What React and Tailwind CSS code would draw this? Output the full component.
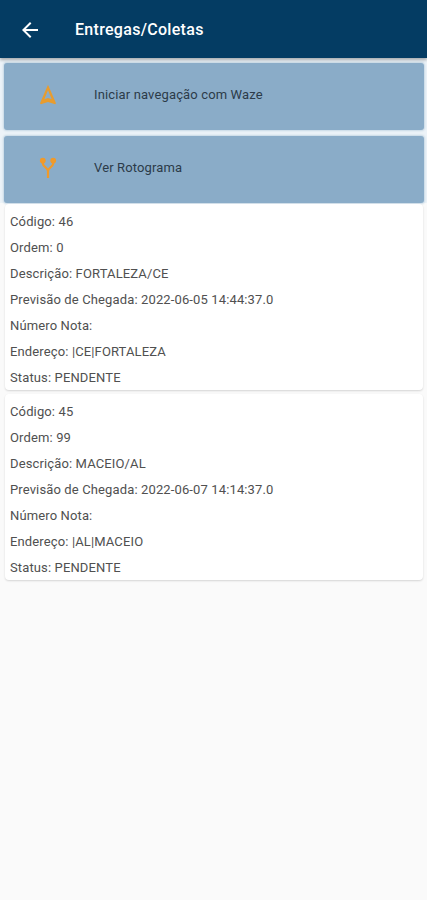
import React from "react";
import { MdArrowBack } from "react-icons/md";

const deliveries = [
  {
    codigo: "46",
    ordem: "0",
    descricao: "FORTALEZA/CE",
    previsao: "2022-06-05 14:44:37.0",
    nota: "",
    endereco: "|CE|FORTALEZA",
    status: "PENDENTE",
  },
  {
    codigo: "45",
    ordem: "99",
    descricao: "MACEIO/AL",
    previsao: "2022-06-07 14:14:37.0",
    nota: "",
    endereco: "|AL|MACEIO",
    status: "PENDENTE",
  },
];

function NavigationIcon() {
  return (
    <svg viewBox="0 0 24 24" className="h-6 w-6 fill-[#e89c2e]">
      <path
        fillRule="evenodd"
        d="M12 1.8 4 20.3l.8.9L12 19l7.2 2.2.8-.9L12 1.8zm0 5.4 3.7 9L12 15.1l-3.7 1.1L12 7.2z"
      />
    </svg>
  );
}

function ForkIcon() {
  return (
    <svg viewBox="0 0 24 24" className="h-6 w-6 fill-[#f09a2a]">
      <circle cx="6.8" cy="4.6" r="2.9" />
      <circle cx="17.2" cy="4.6" r="2.9" />
      <path
        d="M6.8 5v2.5c0 3 5.2 4.5 5.2 7.5V22M17.2 5v2.5c0 3-5.2 4.5-5.2 7.5"
        className="fill-none stroke-[#f09a2a] stroke-[2.2]"
      />
    </svg>
  );
}

function ActionTile({ icon, label }) {
  return (
    <button className="flex h-[67px] w-full items-center rounded-[3px] bg-[#8aacc8] pb-1 pl-8 text-left text-[#2c3b49] shadow-[0_0_2px_1px_#c6d8e5]">
      {icon}
      <span className="ml-[34px] text-[13px] tracking-[0.14px]">{label}</span>
    </button>
  );
}

function DeliveryCard({ item }) {
  return (
    <div className="h-[186px] rounded bg-white px-[5px] pt-[5px] text-[13px] leading-[26px] tracking-[0.13px] text-[#505050] shadow-[0_1px_2px_rgba(0,0,0,0.15)]">
      <p>Código: {item.codigo}</p>
      <p>Ordem: {item.ordem}</p>
      <p>Descrição: {item.descricao}</p>
      <p>Previsão de Chegada: {item.previsao}</p>
      <p>Número Nota: {item.nota}</p>
      <p>Endereço: {item.endereco}</p>
      <p>Status: {item.status}</p>
    </div>
  );
}

export default function App() {
  return (
    <div className="min-h-screen bg-[#fafafa] font-['Roboto',sans-serif]">
      <header className="relative z-10 flex h-[58px] items-center bg-[#043c63] pt-0.5 pl-[18px] text-white shadow-[0_2px_3px_rgba(0,0,0,0.3)]">
        <MdArrowBack className="h-6 w-6" />
        <h1 className="ml-[33px] text-base font-medium tracking-[0.3px]">Entregas/Coletas</h1>
      </header>

      <div className="flex flex-col gap-[6px] bg-[#edf3f8] pt-[5px] pr-[3px] pl-1">
        <ActionTile icon={<NavigationIcon />} label="Iniciar navegação com Waze" />
        <ActionTile icon={<ForkIcon />} label="Ver Rotograma" />
      </div>

      <div className="mt-px flex flex-col gap-1 pr-1 pl-[5px]">
        {deliveries.map((item) => (
          <DeliveryCard key={item.codigo} item={item} />
        ))}
      </div>
    </div>
  );
}
